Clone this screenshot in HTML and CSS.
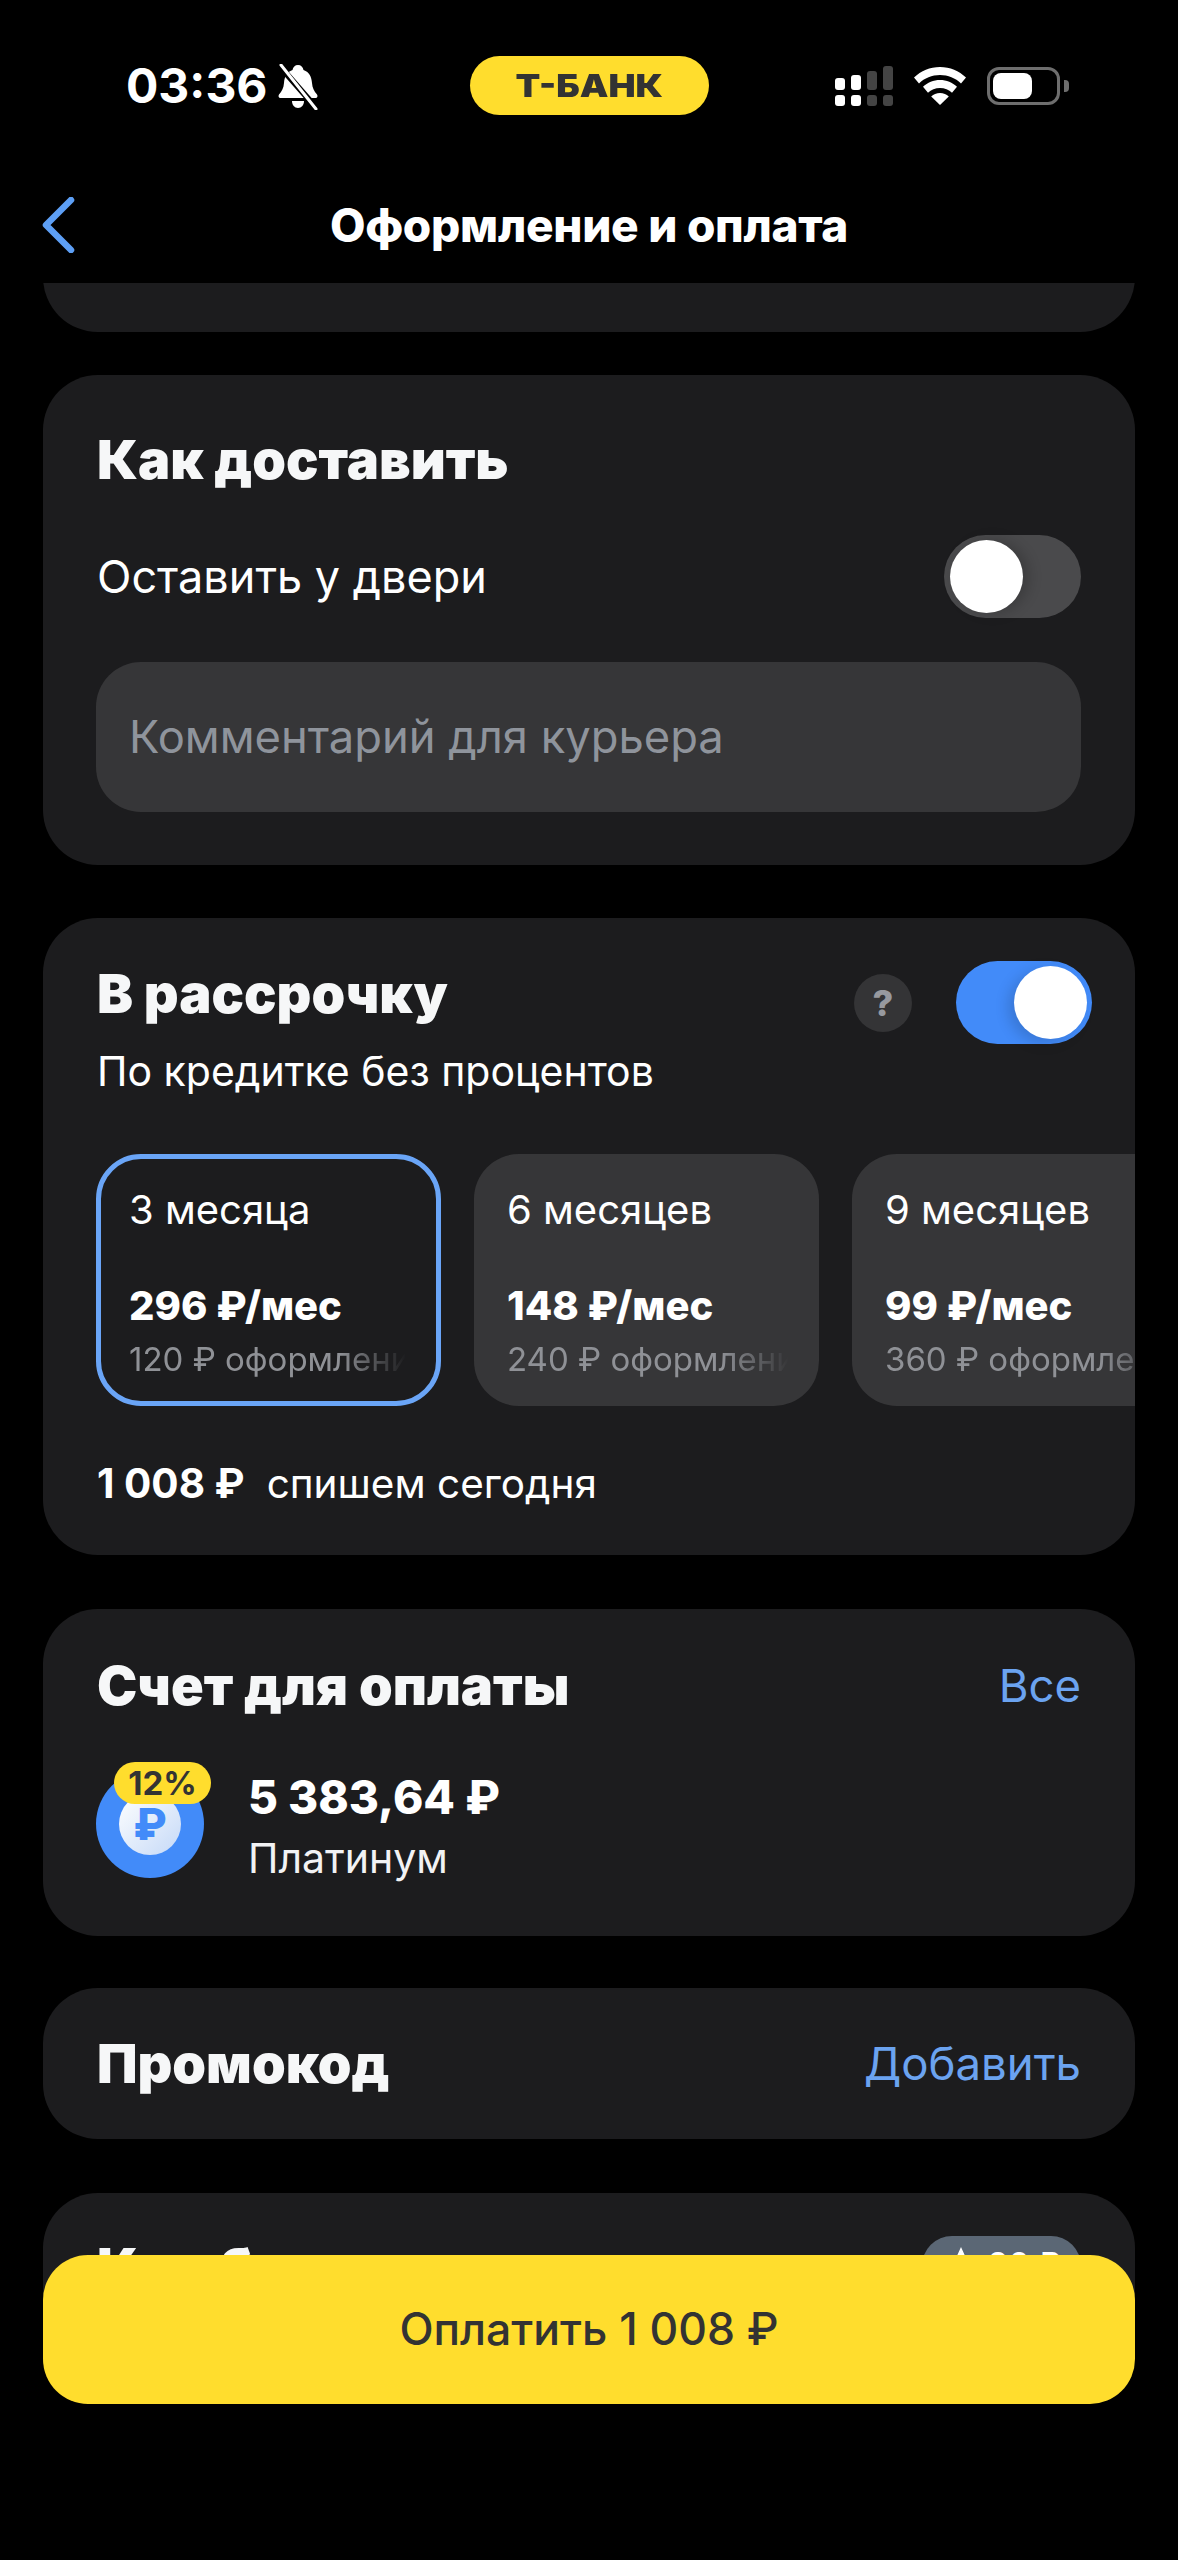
FILE: index.html
```html
<!DOCTYPE html>
<html lang="ru">
<head>
    <meta charset="UTF-8">
    <meta name="viewport" content="width=device-width, initial-scale=1.0">
    <title>Оформление и оплата</title>
    <link rel="stylesheet" href="styles.css">
</head>
<body>
    <div class="page">
        <div class="status-bar">
            <div class="status-left">
                <span class="time">03:36</span>
                <svg class="bell" viewBox="0 0 40 46" width="40" height="46">
                    <path fill="#fff" d="M20 1c3 0 5 2 5.500 5 6 2 8 7 8.500 13 .4 5 2 8 5 11.500 1 1.500 .5 3.500-1.500 3.500H2.500C.5 34 0 32 1 30.500 4 27 5.600 24 6 19c.5-6 2.500-11 8.500-13C15 3 17 1 20 1z"/>
                    <path fill="#fff" d="M14 37h12c0 4-2.500 7-6 7s-6-3-6-7z"/>
                    <path stroke="#000" stroke-width="6" d="M-1 -1L41 47"/>
                    <path stroke="#fff" stroke-width="3" stroke-linecap="round" d="M3 1L38 45"/>
                </svg>
            </div>
            <div class="bank-pill"><span>Т-БАНК</span></div>
            <div class="status-right">
                <svg class="signal" viewBox="0 0 58 40" width="58" height="40">
                    <rect x="0" y="12" width="10" height="12" rx="3" fill="#fff"/>
                    <rect x="0" y="29" width="10" height="11" rx="3" fill="#fff"/>
                    <rect x="16" y="9" width="10" height="15" rx="3" fill="#fff"/>
                    <rect x="16" y="29" width="10" height="11" rx="3" fill="#fff"/>
                    <rect x="32" y="5" width="10" height="19" rx="3" fill="#444"/>
                    <rect x="32" y="29" width="10" height="11" rx="3" fill="#444"/>
                    <rect x="48" y="0" width="10" height="24" rx="3" fill="#444"/>
                    <rect x="48" y="29" width="10" height="11" rx="3" fill="#444"/>
                </svg>
                <svg class="wifi" viewBox="0 0 52 38" width="52" height="38">
                    <path fill="#fff" d="M26 0c10 0 19 4 26 10.500l-5 6C41.500 11 34 8 26 8S10.500 11 5 16.500l-5-6C7 4 16 0 26 0z"/>
                    <path fill="#fff" d="M26 13c6.500 0 12.500 2.500 17 6.800l-5 6C35 23 30.500 21 26 21s-9 2-12 4.800l-5-6C13.500 15.500 19.500 13 26 13z"/>
                    <path fill="#fff" d="M26 26c3.500 0 6.500 1.300 8.800 3.500L26 38l-8.800-8.500C19.500 27.300 22.500 26 26 26z"/>
                </svg>
                <div class="battery">
                    <div class="battery-body"><div class="battery-level"></div></div>
                    <div class="battery-nub"></div>
                </div>
            </div>
        </div>

        <div class="nav">
            <div class="nav-back">
                <svg viewBox="0 0 34 56" width="34" height="56">
                    <path fill="none" stroke="#5d9ff5" stroke-width="6.500" stroke-linecap="round" stroke-linejoin="round" d="M30 3L5 28l25 25"/>
                </svg>
            </div>
            <div class="nav-title">Оформление и оплата</div>
            <div></div>
        </div>

        <div class="scroller">
            <div class="card card-prev"></div>

            <div class="card card-delivery">
                <div class="card-title">Как доставить</div>
                <div class="row row-door">
                    <span class="text">Оставить у двери</span>
                    <div class="toggle toggle-off"><div class="knob"></div></div>
                </div>
                <div class="comment">Комментарий для курьера</div>
            </div>

            <div class="card card-plan">
                <div class="row row-plan">
                    <div>
                        <div class="card-title">В рассрочку</div>
                        <div class="plan-sub">По кредитке без процентов</div>
                    </div>
                    <div class="plan-controls">
                        <div class="help">?</div>
                        <div class="toggle toggle-on"><div class="knob"></div></div>
                    </div>
                </div>
                <div class="options">
                    <div class="option option-active">
                        <div class="option-term">3 месяца</div>
                        <div class="option-price">296 ₽/мес</div>
                        <div class="option-fee">120 ₽ оформление</div>
                    </div>
                    <div class="option">
                        <div class="option-term">6 месяцев</div>
                        <div class="option-price">148 ₽/мес</div>
                        <div class="option-fee">240 ₽ оформление</div>
                    </div>
                    <div class="option">
                        <div class="option-term">9 месяцев</div>
                        <div class="option-price">99 ₽/мес</div>
                        <div class="option-fee">360 ₽ оформление</div>
                    </div>
                </div>
                <div class="plan-total"><strong>1 008 ₽</strong> <span>спишем сегодня</span></div>
            </div>

            <div class="card card-account">
                <div class="row">
                    <div class="card-title">Счет для оплаты</div>
                    <span class="link">Все</span>
                </div>
                <div class="account">
                    <div class="coin">
                        <div class="coin-inner">₽</div>
                        <div class="coin-badge">12%</div>
                    </div>
                    <div>
                        <div class="account-sum">5 383,64 ₽</div>
                        <div class="account-name">Платинум</div>
                    </div>
                </div>
            </div>

            <div class="card card-promo">
                <div class="row">
                    <div class="card-title">Промокод</div>
                    <span class="link">Добавить</span>
                </div>
            </div>

            <div class="card card-cashback">
                <div class="row row-cashback">
                    <div class="card-title">Кэшбэк</div>
                    <div class="cashback-badge">
                        <svg viewBox="0 0 34 34" width="34" height="34">
                            <path fill="#fff" d="M17 1l5 11 11 5-11 5-5 11-5-11-11-5 11-5z"/>
                        </svg>
                        <span>90 ₽</span>
                    </div>
                </div>
            </div>
        </div>

        <div class="pay-button">Оплатить 1 008 ₽</div>
    </div>
</body>
</html>
```

FILE: styles.css
```css
* {
    box-sizing: border-box;
}
body {
    margin: 0;
    background: #000;
    color: #fff;
    font-family: Inter, "Noto Sans", sans-serif;
}
.page {
    position: relative;
    width: 1178px;
    height: 2560px;
    overflow: hidden;
    background: #000;
}

/* status bar */
.status-bar {
    display: grid;
    grid-template-columns: 1fr auto 1fr;
    align-items: center;
    height: 59px;
    margin-top: 56px;
}
.status-left {
    display: flex;
    align-items: center;
    gap: 10px;
    padding-left: 126px;
}
.time {
    font-size: 48px;
    font-weight: 700;
    line-height: 59px;
}
.bell {
    margin-top: 2px;
}
.bank-pill {
    width: 239px;
    height: 59px;
    border-radius: 30px;
    background: #ffdd2d;
    color: #333;
    font-size: 32px;
    font-weight: 900;
    line-height: 59px;
    text-align: center;
}
.bank-pill span {
    display: inline-block;
    transform: scaleX(1.13);
}
.status-right {
    display: flex;
    align-items: center;
    justify-content: flex-end;
    gap: 21px;
    padding-right: 109px;
}
.battery {
    display: flex;
    align-items: center;
    gap: 4px;
}
.battery-body {
    width: 73px;
    height: 38px;
    padding: 3px;
    border: 3px solid #6e6e6e;
    border-radius: 12px;
}
.battery-level {
    width: 39px;
    height: 100%;
    border-radius: 8px;
    background: #fff;
}
.battery-nub {
    width: 5px;
    height: 12px;
    border-radius: 0 4px 4px 0;
    background: #6e6e6e;
}

/* nav */
.nav {
    display: grid;
    grid-template-columns: 1fr auto 1fr;
    align-items: center;
    height: 116px;
    margin-top: 52px;
}
.nav-back {
    display: flex;
    padding-left: 41px;
}
.nav-title {
    font-size: 46px;
    font-weight: 800;
    letter-spacing: -0.3px;
}

/* scrolling content */
.scroller {
    display: flex;
    flex-direction: column;
    gap: 53px;
    height: 2050px;
    padding: 0 43px;
    overflow: hidden;
}
.card {
    flex: none;
    border-radius: 55px;
    background: #1c1c1e;
    padding: 0 54px;
    overflow: hidden;
}
.card-prev {
    height: 200px;
    margin-top: -151px;
    margin-bottom: -10px;
}
.card-title {
    font-size: 54px;
    font-weight: 900;
    line-height: 60px;
    color: #f6f7f8;
}
.text {
    font-size: 45px;
    line-height: 50px;
}
.row {
    display: flex;
    align-items: center;
    justify-content: space-between;
}
.link {
    font-size: 45.500px;
    line-height: 60px;
    color: #6ba3f0;
}

/* delivery */
.card-delivery {
    height: 490px;
    padding-top: 55px;
}
.row-door {
    height: 83px;
    margin-top: 45px;
}
.comment {
    height: 150px;
    margin-top: 44px;
    margin-left: -1px;
    padding-left: 33px;
    border-radius: 45px;
    background: #363638;
    color: #8f949c;
    font-size: 45.300px;
    line-height: 150px;
}

/* toggles */
.toggle {
    display: flex;
    align-items: center;
    width: 137px;
    height: 83px;
    padding: 0 6px;
    border-radius: 42px;
}
.toggle-off {
    background: #4a4a4c;
}
.toggle-on {
    width: 136px;
    justify-content: flex-end;
    padding: 0 5px;
    background: #428bf9;
}
.knob {
    width: 73px;
    height: 73px;
    border-radius: 50%;
    background: #fff;
}
.toggle-off .knob {
    box-shadow: 6px 0 14px rgba(0, 0, 0, 0.2);
}
.toggle-on .knob {
    box-shadow: -6px 4px 14px rgba(0, 0, 0, 0.15);
}

/* installments */
.card-plan {
    height: 637px;
    padding-top: 43px;
    padding-right: 0;
}
.row-plan {
    align-items: flex-start;
    height: 193px;
    padding-right: 43px;
}
.row-plan > div:first-child {
    padding-top: 3px;
}
.plan-sub {
    margin-top: 22px;
    font-size: 41px;
    line-height: 50px;
}
.plan-controls {
    display: flex;
    align-items: center;
    gap: 44px;
}
.help {
    width: 58px;
    height: 58px;
    border-radius: 50%;
    background: #343436;
    color: #97999f;
    font-size: 36px;
    font-weight: 800;
    line-height: 58px;
    text-align: center;
}
.options {
    display: flex;
    gap: 33px;
    margin-left: -1px;
}
.option {
    flex: none;
    width: 345px;
    height: 252px;
    padding: 32px 0 0 33px;
    border-radius: 45px;
    background: #363638;
    overflow: hidden;
}
.option-active {
    padding: 27px 0 0 28px;
    border: 5px solid #6aa5f7;
    background: #1c1c1e;
}
.option-term {
    font-size: 40px;
    line-height: 48px;
}
.option-price {
    margin-top: 47px;
    font-size: 40px;
    font-weight: 800;
    line-height: 50px;
}
.option-fee {
    margin-top: 6px;
    margin-right: 30px;
    color: #8f9196;
    font-size: 33px;
    line-height: 44px;
    white-space: nowrap;
    overflow: hidden;
    -webkit-mask-image: linear-gradient(to right, #000 76%, transparent 100%);
    mask-image: linear-gradient(to right, #000 76%, transparent 100%);
}
.plan-total {
    display: flex;
    gap: 22px;
    margin-top: 54px;
    font-size: 40.500px;
    line-height: 48px;
}
.plan-total strong {
    font-weight: 700;
}

/* account */
.card-account {
    height: 327px;
    margin-top: 1px;
    padding-top: 47px;
}
.account {
    display: flex;
    align-items: center;
    gap: 44px;
    margin-top: 49px;
    margin-left: -1px;
}
.coin {
    position: relative;
    display: flex;
    align-items: center;
    justify-content: center;
    flex: none;
    width: 108px;
    height: 108px;
    border-radius: 50%;
    background: #428bf9;
}
.coin-inner {
    width: 62px;
    height: 62px;
    border-radius: 50%;
    background: linear-gradient(135deg, #fff, #c5d9f7);
    color: #428bf9;
    font-size: 44px;
    font-weight: 800;
    line-height: 62px;
    text-align: center;
}
.coin-badge {
    position: absolute;
    top: -8px;
    left: 18px;
    width: 97px;
    height: 42px;
    border-radius: 21px;
    background: #ffdd2d;
    color: #333;
    font-size: 33px;
    font-weight: 700;
    line-height: 42px;
    text-align: center;
}
.account-sum {
    margin-top: 4px;
    font-size: 46px;
    font-weight: 800;
    line-height: 56px;
}
.account-name {
    margin-top: 8px;
    font-size: 41px;
    line-height: 50px;
    color: #f2f2f4;
}

/* promo */
.card-promo {
    display: flex;
    flex-direction: column;
    justify-content: center;
    height: 151px;
    margin-top: -1px;
}

/* cashback */
.card-cashback {
    height: 260px;
    margin-top: 1px;
    padding-top: 43px;
}
.row-cashback {
    align-items: flex-start;
}
.row-cashback .card-title {
    margin-top: 2px;
}
.cashback-badge {
    display: flex;
    align-items: flex-start;
    gap: 10px;
    width: 159px;
    height: 60px;
    padding: 10px 0 0 22px;
    border-radius: 30px;
    background: #5b6775;
    font-size: 32px;
    font-weight: 600;
    line-height: 38px;
}

/* pay button */
.pay-button {
    position: absolute;
    left: 43px;
    right: 43px;
    bottom: 156px;
    height: 149px;
    border-radius: 45px;
    background: #ffdd2d;
    color: #333;
    font-size: 44.500px;
    font-weight: 500;
    line-height: 149px;
    text-align: center;
}
```
